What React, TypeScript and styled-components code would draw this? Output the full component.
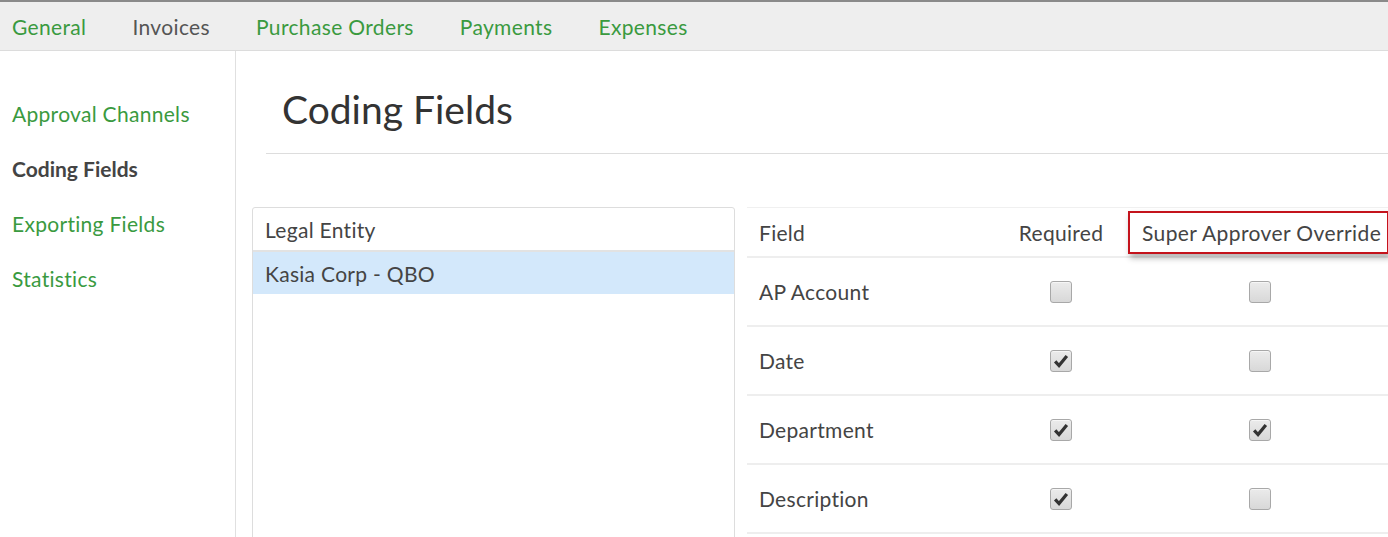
import styled, {createGlobalStyle} from "styled-components";

const GlobalStyle = createGlobalStyle`
    html, body {
        margin: 0;
        padding: 0;
        background: #fff;
        overflow: hidden;
    }
    body {
        font-family: Lato, "Open Sans", "Liberation Sans", sans-serif;
        color: #444;
    }
`

const TopBar = styled.nav`
    height: 48px;
    border-top: 2px solid #8a8a8a;
    border-bottom: 1px solid #dcdcdc;
    background: #eeeeee;
    display: flex;
    align-items: center;
    padding-left: 12px;
    gap: 46px;
`

const TopLink = styled.a<{active?: boolean}>`
    font-size: 21px;
    letter-spacing: 0.35px;
    line-height: 24px;
    text-decoration: none;
    color: ${p => p.active ? '#555' : '#3a9a3f'};
    padding-top: 2px;
`

const Body = styled.div`
    display: flex;
    height: 486px;
`

const Sidebar = styled.aside`
    width: 236px;
    flex-shrink: 0;
    border-right: 1px solid #e0e0e0;
    padding-top: 51px;
    display: flex;
    flex-direction: column;
    gap: 31px;
    box-sizing: border-box;
`

const SideLink = styled.a<{active?: boolean}>`
    padding-left: 12px;
    font-size: 21px;
    letter-spacing: ${p => p.active ? 0 : 0.3}px;
    line-height: 24px;
    text-decoration: none;
    color: ${p => p.active ? '#444' : '#3a9a3f'};
    font-weight: ${p => p.active ? 700 : 400};
`

const Main = styled.main`
    flex: 1;
    min-width: 0;
    padding-left: 16px;
`

const TitleBlock = styled.div`
    margin-left: 14px;
    height: 102px;
    border-bottom: 1px solid #dddddd;
    display: flex;
    align-items: center;
    padding-left: 16px;
`

const Title = styled.h1`
    margin: 14px 0 0 0;
    font-size: 39px;
    font-weight: 400;
    color: #333;
`

const Content = styled.div`
    margin-top: 53px;
    display: flex;
    gap: 12px;
    align-items: flex-start;
`

const EntityPanel = styled.div`
    width: 483px;
    height: 360px;
    flex-shrink: 0;
    border: 1px solid #dddddd;
    border-radius: 3px;
    box-sizing: border-box;
`

const EntityHeader = styled.div`
    height: 42px;
    display: flex;
    align-items: center;
    padding-left: 12px;
    border-bottom: 2px solid #e2e2e2;
    font-size: 21px;
    letter-spacing: 0.3px;
    color: #444;
`

const EntityRow = styled.div<{selected?: boolean}>`
    height: 42px;
    display: flex;
    align-items: center;
    padding-left: 12px;
    font-size: 21px;
    letter-spacing: 0.3px;
    color: #444;
    background: ${p => p.selected ? '#d3e8fb' : 'transparent'};
`

const FieldTable = styled.div`
    width: 657px;
    flex-shrink: 0;
    display: grid;
    grid-template-columns: 259px 110px 288px;
    border-top: 1px solid #f0f0f0;
`

const HeadCell = styled.div<{align?: 'left' | 'center'}>`
    height: 48px;
    display: flex;
    align-items: center;
    justify-content: ${p => p.align === 'center' ? 'center' : 'flex-start'};
    padding-left: ${p => p.align === 'center' ? 0 : 12}px;
    border-bottom: 2px solid #eeeeee;
    font-size: 21px;
    letter-spacing: 0.3px;
    color: #444;
    white-space: nowrap;
`

const Highlight = styled.span`
    display: inline-flex;
    align-items: center;
    height: 39px;
    padding: 0 6px 0 12px;
    border: 2px solid #c4131c;
    box-shadow: 2px 4px 6px rgba(0, 0, 0, 0.3);
    background: #fff;
    letter-spacing: 0.4px;
`

const Cell = styled.div<{align?: 'left' | 'center'}>`
    height: 67px;
    display: flex;
    align-items: center;
    justify-content: ${p => p.align === 'center' ? 'center' : 'flex-start'};
    padding-left: ${p => p.align === 'center' ? 0 : 12}px;
    border-bottom: 2px solid #eeeeee;
    font-size: 21px;
    letter-spacing: 0.3px;
    color: #444;
`

const OverrideCell = styled(Cell)`
    justify-content: flex-start;
    padding-left: 133px;
`

const Box = styled.span`
    width: 22px;
    height: 22px;
    box-sizing: border-box;
    border: 1px solid #a8a8a8;
    border-radius: 3px;
    background: linear-gradient(#ebebeb, #d8d8d8);
    box-shadow: inset 0 1px 0 #f6f6f6;
    display: inline-flex;
    align-items: center;
    justify-content: center;
`

const Checkbox = ({checked}: {checked: boolean}) => (
    <Box>
        {checked && (
            <svg width="18" height="18" viewBox="0 0 20 20">
                <path d="M3.5 10.5 L7.8 15 L16.5 4.5" fill="none" stroke="#333" strokeWidth="3.6"
                      strokeLinejoin="miter"/>
            </svg>
        )}
    </Box>
)

const fields = [
    {name: 'AP Account', required: false, override: false},
    {name: 'Date', required: true, override: false},
    {name: 'Department', required: true, override: true},
    {name: 'Description', required: true, override: false},
]

export default function App() {
    return (
        <>
            <GlobalStyle/>
            <TopBar>
                <TopLink href="#">General</TopLink>
                <TopLink href="#" active>Invoices</TopLink>
                <TopLink href="#">Purchase Orders</TopLink>
                <TopLink href="#">Payments</TopLink>
                <TopLink href="#">Expenses</TopLink>
            </TopBar>
            <Body>
                <Sidebar>
                    <SideLink href="#">Approval Channels</SideLink>
                    <SideLink href="#" active>Coding Fields</SideLink>
                    <SideLink href="#">Exporting Fields</SideLink>
                    <SideLink href="#">Statistics</SideLink>
                </Sidebar>
                <Main>
                    <TitleBlock>
                        <Title>Coding Fields</Title>
                    </TitleBlock>
                    <Content>
                        <EntityPanel>
                            <EntityHeader>Legal Entity</EntityHeader>
                            <EntityRow selected>Kasia Corp - QBO</EntityRow>
                        </EntityPanel>
                        <FieldTable>
                            <HeadCell>Field</HeadCell>
                            <HeadCell align="center">Required</HeadCell>
                            <HeadCell>
                                <Highlight>Super Approver Override</Highlight>
                            </HeadCell>
                            {fields.map(f => (
                                <>
                                    <Cell key={f.name}>{f.name}</Cell>
                                    <Cell align="center"><Checkbox checked={f.required}/></Cell>
                                    <OverrideCell><Checkbox checked={f.override}/></OverrideCell>
                                </>
                            ))}
                        </FieldTable>
                    </Content>
                </Main>
            </Body>
        </>
    );
}
